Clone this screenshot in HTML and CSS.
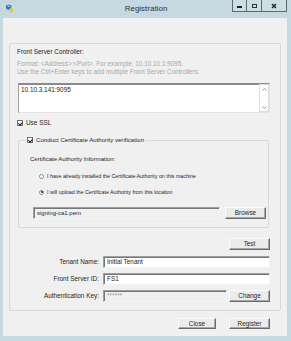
FILE: index.html
```html
<!DOCTYPE html>
<html lang="en">
<head>
    <meta charset="UTF-8">
    <title>Registration</title>
    <link rel="stylesheet" href="styles.css">
</head>
<body>
    <div class="window">
        <div class="titlebar">
            <svg class="app-icon" viewBox="0 0 8 8">
                <path d="M1 1.5 L4 0.5 L6.5 1.5 L6 4.5 L3.5 6 L1 4.5 Z" fill="#2f78c8"></path>
                <path d="M2 2 L4 1.3 L5.5 2 L4 3.2 Z" fill="#8cc4f0"></path>
                <rect x="4.5" y="4.5" width="3.5" height="3.5" fill="#f2c320"></rect>
            </svg>
            <span class="title">Registration</span>
            <div class="caption-buttons">
                <span class="cap-btn cap-min"><span class="glyph-min"></span></span>
                <span class="cap-btn cap-max"><span class="glyph-max"></span></span>
                <span class="cap-btn cap-close">
                    <svg viewBox="0 0 6 6"><path d="M1 1 L5 5 M5 1 L1 5" stroke="#222" stroke-width="1.4"></path></svg>
                </span>
            </div>
        </div>

        <div class="client">
            <div class="group">
                <div class="label">Front Server Controller:</div>
                <div class="hint">Format: &lt;Address&gt;:&lt;Port&gt;. For example, 10.10.10.1:9095.<br>Use the Ctrl+Enter keys to add multiple Front Server Controllers.</div>

                <div class="text-area">
                    <div class="text-area-content">10.10.3.141:9095</div>
                    <div class="scrollbar">
                        <span class="scroll-arrow">
                            <svg viewBox="0 0 5 3"><path d="M0.5 2.5 L2.5 0.5 L4.5 2.5" fill="none" stroke="#777" stroke-width="0.8"></path></svg>
                        </span>
                        <span class="scroll-arrow">
                            <svg viewBox="0 0 5 3"><path d="M0.5 0.5 L2.5 2.5 L4.5 0.5" fill="none" stroke="#777" stroke-width="0.8"></path></svg>
                        </span>
                    </div>
                </div>

                <div class="check-row">
                    <span class="checkbox checked"></span>
                    <span>Use SSL</span>
                </div>

                <fieldset class="ca-group">
                    <legend class="ca-legend">
                        <span class="checkbox checked"></span>
                        <span>Conduct Certificate Authority verification</span>
                    </legend>
                    <div class="ca-body">
                        <div class="ca-label">Certificate Authority Information:</div>
                        <div class="radio-row first">
                            <span class="radio"></span>
                            <span>I have already installed the Certificate Authority on this machine</span>
                        </div>
                        <div class="radio-row">
                            <span class="radio selected"></span>
                            <span>I will upload the Certificate Authority from this location</span>
                        </div>
                        <div class="file-row">
                            <div class="input readonly">signing-ca1.pem</div>
                            <button class="button">Browse</button>
                        </div>
                    </div>
                </fieldset>

                <div class="test-row">
                    <button class="button">Test</button>
                </div>

                <div class="form-grid">
                    <span class="form-label">Tenant Name:</span>
                    <div class="input">Initial Tenant</div>

                    <span class="form-label">Front Server ID:</span>
                    <div class="input">FS1</div>

                    <span class="form-label">Authentication Key:</span>
                    <div class="key-row">
                        <div class="input readonly masked">******</div>
                        <button class="button">Change</button>
                    </div>
                </div>
            </div>

            <div class="dialog-buttons">
                <button class="button close-btn">Close</button>
                <button class="button">Register</button>
            </div>
        </div>
    </div>
</body>
</html>
```

FILE: styles.css
```css
:root {
    --frame-color: #c6d8e0;
    --client-color: #f0f0f0;
    --group-border: #d8d8d8;
    --text-color: #1e1e1e;
    --hint-color: #a8a8a8;
}

* {
    margin: 0;
    padding: 0;
    box-sizing: border-box;
}

body {
    font-family: "Liberation Sans", Arial, sans-serif;
    font-size: 6.4px;
    line-height: 8px;
    color: var(--text-color);
    background-color: var(--frame-color);
}

.window {
    width: 291px;
    height: 341px;
    display: flex;
    flex-direction: column;
    background-color: var(--frame-color);
}

/* title bar */
.titlebar {
    height: 18px;
    flex-shrink: 0;
    display: grid;
    grid-template-columns: 1fr auto 1fr;
    align-items: start;
    padding: 0 4px 0 5px;
}

.app-icon {
    width: 8px;
    height: 8px;
    margin-top: 4px;
}

.title {
    font-size: 8px;
    line-height: 10px;
    margin-top: 4px;
    color: #333;
}

.caption-buttons {
    justify-self: end;
    display: flex;
}

.cap-btn {
    height: 12px;
    display: flex;
    align-items: center;
    justify-content: center;
    background-color: #cddde4;
    border: 1px solid #5e6a70;
    border-top: none;
}

.cap-min {
    width: 15px;
}

.cap-max {
    width: 15px;
    border-left: none;
}

.cap-close {
    width: 25px;
    border-left: none;
}

.glyph-min {
    width: 5px;
    height: 2px;
    margin-top: 3px;
    background-color: #222;
}

.glyph-max {
    width: 5px;
    height: 4px;
    border: 1px solid #333;
    border-top-width: 1.5px;
}

.cap-close svg {
    width: 6px;
    height: 6px;
}

/* client area */
.client {
    flex: 1;
    margin: 0 4px 5px 3px;
    padding: 25px 6px 0 6px;
    background-color: var(--client-color);
}

.group {
    border: 1px solid var(--group-border);
    border-radius: 2px;
    padding: 4px 10px 8px 7px;
}

.hint {
    margin-top: 4px;
    color: var(--hint-color);
}

.text-area {
    margin: 7px 0 0 1px;
    height: 30px;
    display: flex;
    background-color: white;
    border: 1px solid;
    border-color: #8a8a8a #e3e3e3 #e3e3e3 #a0a0a0;
    box-shadow: inset 0 1px 0 #8a8a8a;
}

.text-area-content {
    flex: 1;
    padding: 2px 2px;
}

.scrollbar {
    width: 10px;
    display: flex;
    flex-direction: column;
    justify-content: space-between;
    border: 1px solid #dcdcdc;
    background-color: white;
}

.scroll-arrow {
    height: 8px;
    display: flex;
    align-items: center;
    justify-content: center;
}

.scroll-arrow svg {
    width: 5px;
    height: 3px;
}

/* checkbox and radio */
.check-row {
    margin-top: 6px;
    display: flex;
    align-items: center;
    gap: 3px;
    height: 8px;
}

.checkbox {
    width: 6px;
    height: 6px;
    flex-shrink: 0;
    background-color: white;
    border: 1px solid #6d6d6d;
    position: relative;
}

.checkbox.checked::after {
    content: "";
    position: absolute;
    left: 1px;
    top: -0.5px;
    width: 1.5px;
    height: 3px;
    border: solid #111;
    border-width: 0 1px 1px 0;
    transform: rotate(40deg);
}

.ca-group {
    margin: 9px 1px 0 1px;
    padding: 0;
    min-width: 0;
    border: 1px solid var(--group-border);
    border-radius: 2px;
}

.ca-legend {
    margin-left: 6px;
    padding: 0 2px;
    height: 8px;
    font-size: 6.1px;
    display: flex;
    align-items: center;
    gap: 3px;
}

.ca-body {
    padding: 11px 2px 8px 11px;
}

.ca-label {
    font-size: 6px;
}

.radio-row {
    margin: 8px 0 0 9px;
    display: flex;
    align-items: center;
    gap: 3px;
    height: 8px;
    font-size: 5.3px;
}

.radio-row.first {
    margin-top: 9px;
}

.radio {
    width: 5px;
    height: 5px;
    flex-shrink: 0;
    border-radius: 50%;
    background-color: white;
    border: 1px solid #8a8a8a;
    display: flex;
    align-items: center;
    justify-content: center;
}

.radio.selected::after {
    content: "";
    width: 2px;
    height: 2px;
    border-radius: 50%;
    background-color: #222;
}

.file-row {
    margin: 11px 0 0 3px;
    display: flex;
    gap: 5px;
}

.file-row .input {
    flex: 1;
    font-size: 6px;
}

/* inputs and buttons */
.input {
    height: 12px;
    padding: 0 3px;
    line-height: 10px;
    background-color: white;
    border: 1px solid;
    border-color: #a0a0a0 #f4f4f4 #f4f4f4 #a0a0a0;
    box-shadow: inset 1px 1px 0 #767676;
}

.input.readonly {
    background-color: #f0f0f0;
}

.input.masked {
    color: #9a9a9a;
}

.button {
    width: 41px;
    height: 12px;
    flex-shrink: 0;
    font: inherit;
    line-height: 10px;
    color: var(--text-color);
    background-color: #ebebeb;
    border: 1px solid;
    border-color: #fbfbfb #6a6a6a #6a6a6a #fbfbfb;
    box-shadow: inset -1px -1px 0 #a8a8a8;
}

.test-row {
    margin-top: 10px;
    display: flex;
    justify-content: flex-end;
}

.form-grid {
    margin-top: 6px;
    display: grid;
    grid-template-columns: 82px 1fr;
    column-gap: 4px;
    row-gap: 5px;
    align-items: center;
}

.form-label {
    text-align: right;
}

.key-row {
    display: flex;
    gap: 2px;
}

.key-row .input {
    flex: 1;
}

.dialog-buttons {
    margin-top: 7px;
    padding-right: 11px;
    display: flex;
    justify-content: flex-end;
    gap: 13px;
}

.dialog-buttons .button {
    height: 11px;
}

.close-btn {
    width: 38px;
}
```
